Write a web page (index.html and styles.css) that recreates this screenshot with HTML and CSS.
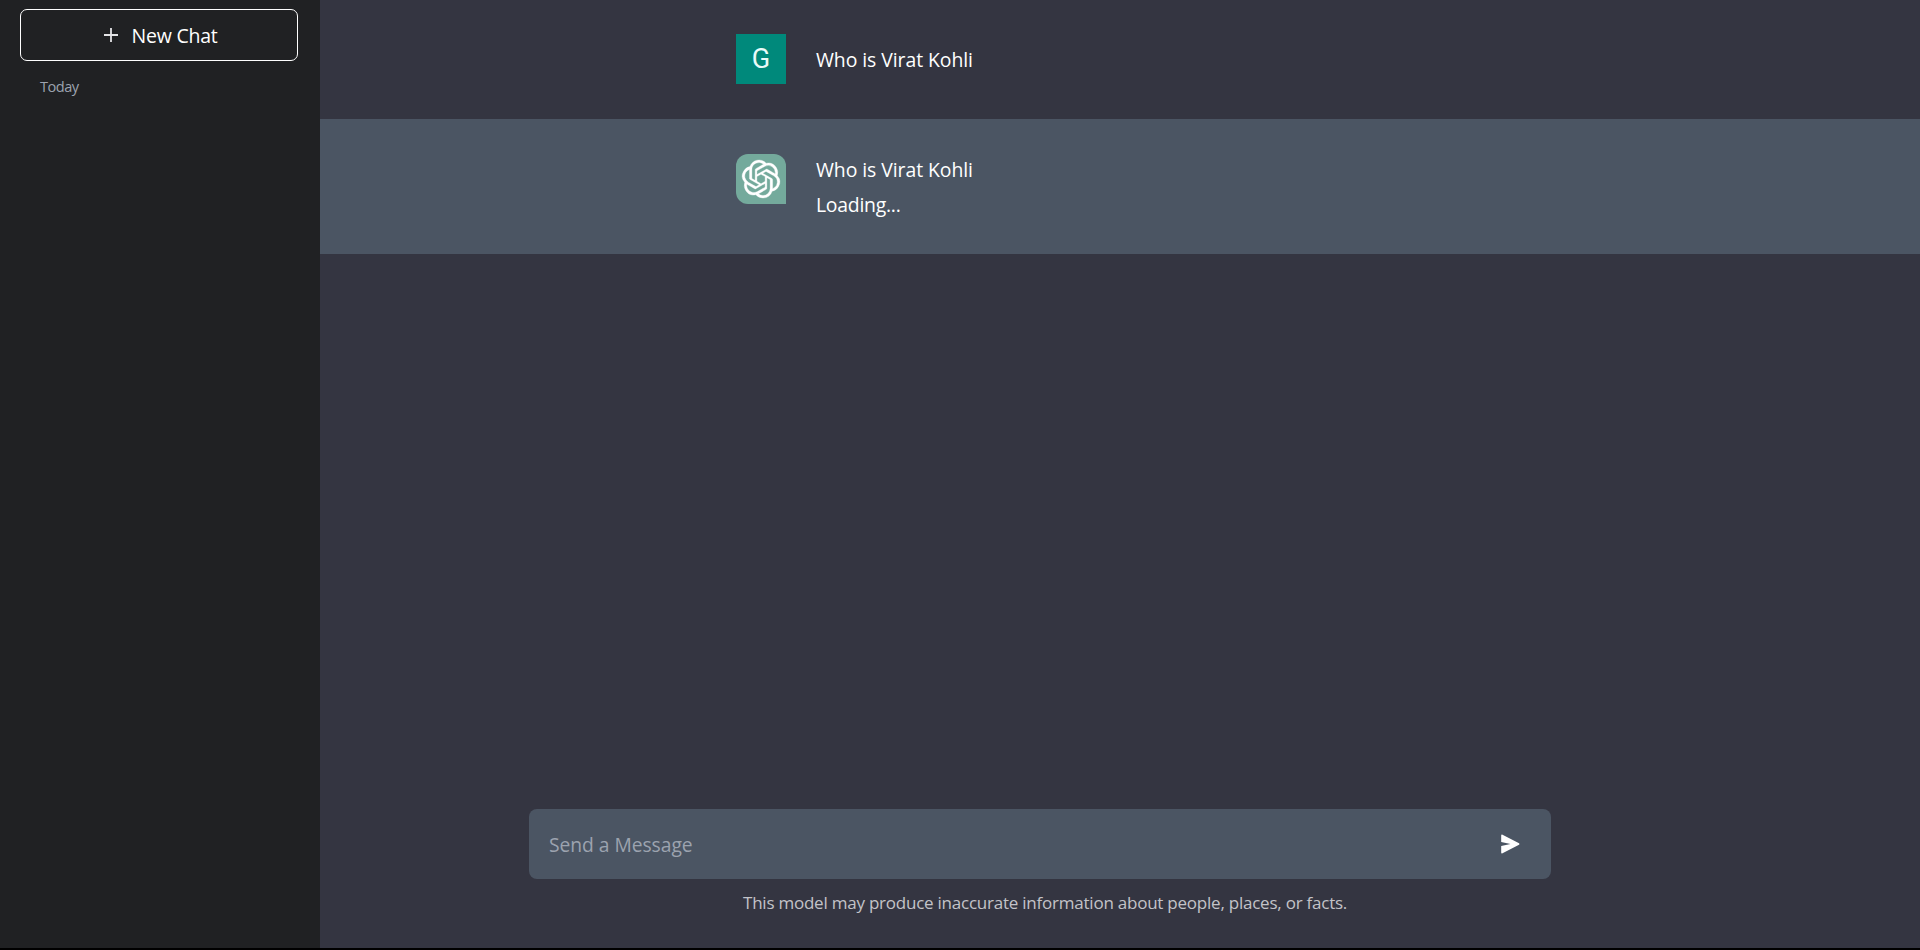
FILE: index.html
```html
<!DOCTYPE html>
<html lang="en">
<head>
<meta charset="utf-8">
<title>Chat</title>
<link rel="stylesheet" href="styles.css">
</head>
<body>
<div class="app">
  <aside class="sidebar">
    <button class="new-chat">
      <svg class="plus" viewBox="0 0 14 14"><path d="M7 0v14M0 7h14"/></svg>
      <span class="new-chat-label">New Chat</span>
    </button>
    <p class="section"><span>Today</span></p>
  </aside>
  <main class="main">
    <section class="message user">
      <div class="avatar avatar-user"><span>G</span></div>
      <p class="text"><span>Who is Virat Kohli</span></p>
    </section>
    <section class="message bot">
      <div class="avatar avatar-bot">
        <svg class="logo" viewBox="0 0 24 24"><path d="M22.2819 9.8211a5.9847 5.9847 0 0 0-.5157-4.9108 6.0462 6.0462 0 0 0-6.5098-2.9A6.0651 6.0651 0 0 0 4.9807 4.1818a5.9847 5.9847 0 0 0-3.9977 2.9 6.0462 6.0462 0 0 0 .7427 7.0966 5.98 5.98 0 0 0 .511 4.9107 6.051 6.051 0 0 0 6.5146 2.9001A5.9847 5.9847 0 0 0 13.2599 24a6.0557 6.0557 0 0 0 5.7718-4.2058 5.9894 5.9894 0 0 0 3.9977-2.9001 6.0557 6.0557 0 0 0-.7475-7.0729zm-9.022 12.6081a4.4755 4.4755 0 0 1-2.8764-1.0408l.1419-.0804 4.7783-2.7582a.7948.7948 0 0 0 .3927-.6813v-6.7369l2.02 1.1686a.071.071 0 0 1 .038.052v5.5826a4.504 4.504 0 0 1-4.4945 4.4944zm-9.6607-4.1254a4.4708 4.4708 0 0 1-.5346-3.0137l.142.0852 4.783 2.7582a.7712.7712 0 0 0 .7806 0l5.8428-3.3685v2.3324a.0804.0804 0 0 1-.0332.0615L9.74 19.9502a4.4992 4.4992 0 0 1-6.1408-1.6464zM2.3408 7.8956a4.485 4.485 0 0 1 2.3655-1.9728V11.6a.7664.7664 0 0 0 .3879.6765l5.8144 3.3543-2.0201 1.1685a.0757.0757 0 0 1-.071 0l-4.8303-2.7865A4.504 4.504 0 0 1 2.3408 7.872zm16.5963 3.8558L13.1038 8.364 15.1192 7.2a.0757.0757 0 0 1 .071 0l4.8303 2.7913a4.4944 4.4944 0 0 1-.6765 8.1042v-5.6772a.79.79 0 0 0-.407-.667zm2.0107-3.0231l-.142-.0852-4.7735-2.7818a.7759.7759 0 0 0-.7854 0L9.409 9.2297V6.8974a.0662.0662 0 0 1 .0284-.0615l4.8303-2.7866a4.4992 4.4992 0 0 1 6.6802 4.66zM8.3065 12.863l-2.02-1.1638a.0804.0804 0 0 1-.038-.0567V6.0742a4.4992 4.4992 0 0 1 7.3757-3.4537l-.142.0805L8.704 5.459a.7948.7948 0 0 0-.3927.6813zm1.0976-2.3654l2.602-1.4998 2.6069 1.4998v2.9994l-2.5974 1.4997-2.6067-1.4997Z"/></svg>
      </div>
      <p class="text"><span>Who is Virat Kohli</span><br><span class="loading">Loading...</span></p>
    </section>
    <footer class="footer">
      <div class="composer">
        <span class="placeholder">Send a Message</span>
        <svg class="send" viewBox="0 0 20 20"><path d="M1.1.1 19 9.1Q20 10 19 10.9L1.1 19.9Q.2 20 .2 19V12L10 10 .2 8V1Q.2 0 1.1.1Z"/></svg>
      </div>
      <p class="note"><span>This model may produce inaccurate information about people, places, or facts.</span></p>
    </footer>
  </main>
</div>
</body>
</html>
```
FILE: styles.css
```css
* { box-sizing: border-box; margin: 0; }
body {
  background: #000;
  color: #fff;
  font-family: "Segoe UI", "Open Sans", "Noto Sans", sans-serif;
}
.app { display: flex; height: 948px; }
.sidebar {
  width: 320px;
  flex: none;
  padding: 9px 22px 0 20px;
  background: #202123;
}
.new-chat {
  display: flex;
  align-items: center;
  justify-content: center;
  gap: 14px;
  width: 100%;
  height: 52px;
  padding: 0 0 0 3px;
  border: 1px solid #fff;
  border-radius: 7px;
  background: none;
  color: #fff;
  font: 19.5px/28px "Segoe UI", "Open Sans", sans-serif;
  letter-spacing: -0.25px;
}
.new-chat-label { padding-top: 2px; }
.plus { width: 14px; height: 14px; fill: none; stroke: #e4e4e6; stroke-width: 1.8; }
.section {
  padding: 14px 20px 0;
  color: #9ca3af;
  font-size: 14.6px;
  line-height: 22px;
  letter-spacing: -0.5px;
}
.main {
  flex: 1;
  display: flex;
  flex-direction: column;
  background: #343541;
}
.message {
  display: flex;
  gap: 30px;
  padding: 34px 0 0 416px;
}
.user { height: 119px; }
.bot { height: 135px; padding-top: 35px; background: #4b5563; }
.avatar {
  display: flex;
  align-items: center;
  justify-content: center;
  width: 50px;
  height: 50px;
  flex: none;
}
.avatar-user { background: #00897b; font: 27px/50px Roboto, sans-serif; color: #e8fbf8; }
.avatar-bot { background: #74aa9c; border-radius: 12px 12px 0 12px; }
.logo { width: 38px; height: 38px; fill: #fff; stroke: #fff; stroke-width: .2; overflow: visible; }
.text { font-size: 19.4px; line-height: 35px; letter-spacing: -0.06px; }
.user .text { padding-top: 8px; }
.bot .text { margin-top: -2px; }
.loading { letter-spacing: -0.25px; }
.footer { margin-top: auto; padding: 0 369px 0 209px; height: 139px; }
.composer {
  display: flex;
  align-items: center;
  justify-content: space-between;
  height: 70px;
  padding: 0 31px 0 20px;
  border-radius: 8px;
  background: #4b5563;
}
.placeholder { padding-top: 2px; color: #9ca3af; font-size: 19.3px; line-height: 28px; letter-spacing: -0.05px; }
.send { width: 19px; height: 20px; fill: #fff; }
.note {
  padding: 10px 0 0 214px;
  color: #c3c3c8;
  font-size: 17px;
  line-height: 28px;
  letter-spacing: -0.23px;
  white-space: nowrap;
}
```
